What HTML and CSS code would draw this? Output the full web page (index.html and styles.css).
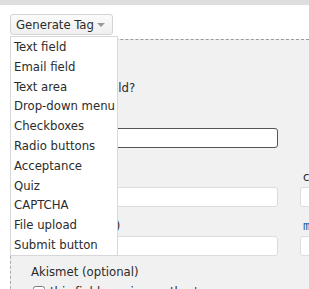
FILE: index.html
```html
<!DOCTYPE html>
<html lang="en">
<head>
    <meta charset="UTF-8">
    <title>Contact form - tag generator</title>
    <link rel="stylesheet" href="styles.css">
</head>
<body>
    <div class="top-bar"></div>

    <div class="toolbar">
        <div class="tag-menu">
            <button type="button" class="tag-btn">Generate Tag <span class="caret"></span></button>
            <ul class="tag-list">
                <li>Text field</li>
                <li>Email field</li>
                <li>Text area</li>
                <li>Drop-down menu</li>
                <li>Checkboxes</li>
                <li>Radio buttons</li>
                <li>Acceptance</li>
                <li>Quiz</li>
                <li>CAPTCHA</li>
                <li>File upload</li>
                <li>Submit button</li>
            </ul>
        </div>
    </div>

    <div class="tag-panel">
        <label class="check required"><input type="checkbox"> Required field?</label>

        <input type="text" class="field dark">

        <div class="form-row">
            <div class="form-group">
                <label>Name</label>
                <input type="text" class="field">
            </div>
            <div class="form-group">
                <label class="side">class (optional)</label>
                <input type="text" class="field">
            </div>
        </div>

        <div class="form-row">
            <div class="form-group">
                <label>Limit (optional)</label>
                <input type="text" class="field">
            </div>
            <div class="form-group">
                <label class="side code">mail-tag</label>
                <input type="text" class="field">
            </div>
        </div>

        <div class="akismet">
            <p>Akismet (optional)</p>
            <label class="check"><input type="checkbox"> this field requires author's name</label>
        </div>
    </div>
</body>
</html>
```

FILE: styles.css
```css
* {
    box-sizing: border-box;
}

body {
    margin: 0;
    background: #fff;
    font-family: 'DejaVu Sans Condensed', 'DejaVu Sans', sans-serif;
    font-size: 13px;
    color: #2b2b2b;
    overflow: hidden;
}

.top-bar {
    height: 5px;
    background: #dedede;
}

.toolbar {
    padding: 9px 10px 0;
    height: 34px;
}

.tag-menu {
    position: relative;
    display: inline-block;
}

.tag-btn {
    display: flex;
    align-items: center;
    justify-content: space-between;
    width: 103px;
    height: 21px;
    padding: 0 7px 0 5px;
    border: 1px solid #d4d4d4;
    border-radius: 3px;
    background: linear-gradient(#fbfbfb, #efefef);
    font-family: 'DejaVu Sans Condensed', 'DejaVu Sans', sans-serif;
    font-size: 13px;
    color: #2b2b2b;
}

.caret {
    width: 0;
    height: 0;
    border-left: 4px solid transparent;
    border-right: 4px solid transparent;
    border-top: 4px solid #999;
}

.tag-list {
    position: absolute;
    top: 22px;
    left: 0;
    z-index: 2;
    width: 108px;
    margin: 0;
    padding: 0;
    list-style: none;
    background: #fff;
    border: 1px solid #d8d8d8;
}

.tag-list li {
    height: 19.8px;
    line-height: 20px;
    padding-left: 3px;
    white-space: nowrap;
}

.tag-panel {
    margin-left: 10px;
    height: 260px;
    padding: 41px 0 0 20px;
    background: #f1f1f1;
    border-top: 1px dashed #999;
    border-left: 1px dashed #aaa;
    line-height: 14px;
}

.check {
    display: flex;
    align-items: center;
    gap: 5px;
    white-space: nowrap;
}

.check input {
    margin: 0;
    width: 12px;
    height: 12px;
}

.field {
    display: block;
    height: 20px;
    border: 1px solid #dcdcdc;
    border-radius: 3px;
    background: #fff;
}

.field.dark {
    width: 247px;
    margin: 33px 0 22px;
    border-color: #555;
}

.form-row {
    display: grid;
    grid-template-columns: 247px 80px;
    gap: 22px;
    margin-bottom: 12px;
}

.form-group {
    display: flex;
    flex-direction: column;
    gap: 3px;
    white-space: nowrap;
}

.form-group .field {
    width: 100%;
}

.side {
    padding-left: 3px;
}

.code {
    font-family: 'DejaVu Sans Mono', monospace;
    font-size: 12px;
    color: #1e5fa8;
}

.akismet p {
    margin: -3px 0 6px;
}

.akismet .check {
    padding-left: 2px;
}
```
